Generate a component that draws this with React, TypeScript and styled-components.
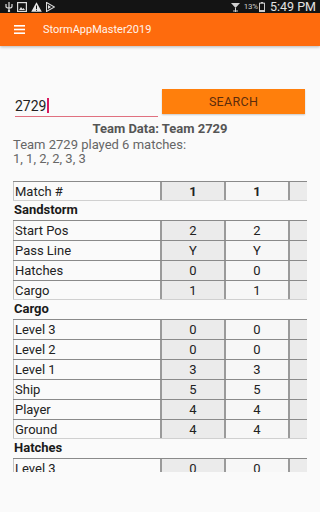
import React from "react";
import styled, { createGlobalStyle } from "styled-components";

const Global = createGlobalStyle`
  html, body { margin: 0; padding: 0; background: #fafafa; }
  body { font-family: Roboto, "Noto Sans", sans-serif; width: 320px; height: 512px; overflow: hidden; }
  * { box-sizing: border-box; }
`;

const Page = styled.div`
  width: 320px;
  height: 512px;
  display: flex;
  flex-direction: column;
  background: #fafafa;
  overflow: hidden;
`;

const StatusBar = styled.div`
  height: 13px;
  background: #141414;
  display: flex;
  align-items: center;
  justify-content: space-between;
  padding: 0 4px 0 5px;
  color: #d8d8d8;
  flex-shrink: 0;
`;

const StatusGroup = styled.div<{ $gap?: number }>`
  display: flex;
  align-items: center;
  gap: ${(p) => (p.$gap ?? 4)}px;
`;

const Pct = styled.span`
  font-size: 8px;
  color: #cfcfcf;
  letter-spacing: -0.2px;
`;

const Clock = styled.span`
  font-size: 12.5px;
  color: #e2e2e2;
  margin-left: 1px;
`;

const AppBar = styled.div`
  height: 33px;
  background: #fe6b0d;
  display: flex;
  align-items: center;
  padding-left: 14px;
  gap: 18px;
  box-shadow: 0 1px 3px rgba(0,0,0,0.28);
  position: relative;
  z-index: 1;
  flex-shrink: 0;
`;

const Title = styled.div`
  color: #fff4ec;
  font-size: 11px;
`;

const Form = styled.div`
  display: grid;
  grid-template-columns: 143px 143px;
  column-gap: 4px;
  margin: 43px 0 0 15px;
`;

const Field = styled.div`
  height: 28px;
  border-bottom: 1.5px solid #e0707f;
  padding-top: 10px;
  font-size: 14px;
  color: #222;
  display: flex;
  align-items: flex-start;
  line-height: 14px;
`;

const Caret = styled.span`
  display: inline-block;
  width: 1.5px;
  height: 15px;
  margin-top: -1px;
  background: #d81b60;
  margin-left: 1px;
`;

const Button = styled.div`
  height: 25px;
  background: #ff7f0c;
  color: #5c2c0c;
  font-size: 12.5px;
  letter-spacing: 0.3px;
  display: flex;
  align-items: center;
  justify-content: center;
  box-shadow: 0 1px 1.5px rgba(0,0,0,0.2);
`;

const Heading = styled.div`
  margin-top: 4px;
  text-align: center;
  font-weight: bold;
  font-size: 13px;
  line-height: 16px;
  color: #555;
`;

const Info = styled.div`
  margin: 1px 0 0 13px;
  font-size: 13px;
  line-height: 14px;
  color: #666;
`;

const TableWrap = styled.div`
  margin: 15px 0 0 13px;
  width: 294px;
  height: 291px;
  overflow: hidden;
`;

const Row = styled.div<{ $last?: boolean }>`
  display: flex;
  height: 20px;
  width: 340px;
  border-top: 1px solid #8a8a8a;
  border-bottom: ${(p) => (p.$last ? "1px solid #d0d0d0" : "none")};
  margin-bottom: ${(p) => (p.$last ? "-1px" : "0")};
`;

const Label = styled.div`
  width: 147px;
  border-left: 1px solid #c4c4c4;
  padding-left: 1px;
  font-size: 13px;
  line-height: 19px;
  color: #222;
  white-space: nowrap;
`;

const Cell = styled.div<{ $alt?: boolean; $bold?: boolean }>`
  width: 64px;
  border-left: 2px solid #9a9a9a;
  background: ${(p) => (p.$alt ? "#f7f7f7" : "#ebebeb")};
  text-align: center;
  font-size: 13px;
  line-height: 20px;
  font-weight: ${(p) => (p.$bold ? "bold" : "normal")};
  color: #222;
`;

const Section = styled.div`
  height: 20px;
  padding-left: 1px;
  font-weight: bold;
  font-size: 13px;
  line-height: 20px;
  color: #1a1a1a;
`;

const Hamburger = () => (
  <svg width="11" height="9" viewBox="0 0 11 9">
    <rect x="0" y="0" width="11" height="1.6" fill="#fff" />
    <rect x="0" y="3.7" width="11" height="1.6" fill="#fff" />
    <rect x="0" y="7.4" width="11" height="1.6" fill="#fff" />
  </svg>
);

const StatusLeft = () => (
  <StatusGroup>
    <svg width="8" height="10" viewBox="0 0 8 10">
      <path d="M4 0 L4 10 M1 2 L1 4.5 Q1 6 4 6 Q7 6 7 4.5 L7 2" stroke="#ddd" strokeWidth="1.2" fill="none" />
      <circle cx="4" cy="9" r="1.2" fill="#ddd" />
    </svg>
    <svg width="10" height="10" viewBox="0 0 10 10">
      <rect x="0.6" y="0.6" width="8.8" height="8.8" stroke="#ddd" strokeWidth="1.2" fill="none" />
      <path d="M2 8 L4 5 L5.5 7 L6.5 6 L8 8 Z" fill="#ddd" />
    </svg>
    <svg width="11" height="10" viewBox="0 0 11 10">
      <path d="M5.5 0.3 L10.8 9.7 L0.2 9.7 Z" fill="#e8e8e8" />
      <rect x="5" y="3.5" width="1" height="3.5" fill="#141414" />
      <rect x="5" y="7.8" width="1" height="1" fill="#141414" />
    </svg>
    <svg width="9" height="10" viewBox="0 0 9 10">
      <path d="M0.5 0.5 L8.5 5 L0.5 9.5 Z" stroke="#ddd" strokeWidth="1.1" fill="none" />
      <path d="M2 3 L5 5 L2 7 Z" fill="#ddd" />
    </svg>
  </StatusGroup>
);

const StatusRight = () => (
  <StatusGroup>
    <svg width="9" height="10" viewBox="0 0 9 10">
      <path d="M0 1 L9 1 L4.5 6 Z" fill="#d0d0d0" />
      <rect x="4" y="6" width="1" height="4" fill="#d0d0d0" />
      <rect x="2" y="8.5" width="5" height="1" fill="#d0d0d0" />
    </svg>
    <StatusGroup $gap={1}>
      <Pct>13%</Pct>
      <svg width="6" height="10" viewBox="0 0 6 10">
        <rect x="1.8" y="0" width="2.4" height="1.2" fill="#ccc" />
        <rect x="0.5" y="1.2" width="5" height="8.3" stroke="#ccc" strokeWidth="1" fill="none" />
        <rect x="1" y="8" width="4" height="1.5" fill="#ccc" />
      </svg>
    </StatusGroup>
    <Clock>5:49 PM</Clock>
  </StatusGroup>
);

type DataRow = { label: string; values: [string, string, string] };
type Group = { title?: string; rows: DataRow[]; bold?: boolean };

const groups: Group[] = [
  { rows: [{ label: "Match #", values: ["1", "1", "2"] }], bold: true },
  {
    title: "Sandstorm",
    rows: [
      { label: "Start Pos", values: ["2", "2", ""] },
      { label: "Pass Line", values: ["Y", "Y", ""] },
      { label: "Hatches", values: ["0", "0", ""] },
      { label: "Cargo", values: ["1", "1", ""] },
    ],
  },
  {
    title: "Cargo",
    rows: [
      { label: "Level 3", values: ["0", "0", ""] },
      { label: "Level 2", values: ["0", "0", ""] },
      { label: "Level 1", values: ["3", "3", ""] },
      { label: "Ship", values: ["5", "5", ""] },
      { label: "Player", values: ["4", "4", ""] },
      { label: "Ground", values: ["4", "4", ""] },
    ],
  },
  {
    title: "Hatches",
    rows: [
      { label: "Level 3", values: ["0", "0", ""] },
      { label: "Level 2", values: ["0", "0", ""] },
    ],
  },
];

export default function App() {
  return (
    <Page>
      <Global />
      <StatusBar>
        <StatusLeft />
        <StatusRight />
      </StatusBar>
      <AppBar>
        <Hamburger />
        <Title>StormAppMaster2019</Title>
      </AppBar>
      <Form>
        <Field>
          2729
          <Caret />
        </Field>
        <Button>SEARCH</Button>
      </Form>
      <Heading>Team Data: Team 2729</Heading>
      <Info>
        Team 2729 played 6 matches:
        <br />
        1, 1, 2, 2, 3, 3
      </Info>
      <TableWrap>
        {groups.map((g, gi) => (
          <React.Fragment key={gi}>
            {g.title && <Section>{g.title}</Section>}
            {g.rows.map((r, ri) => (
              <Row key={ri} $last={ri === g.rows.length - 1}>
                <Label>{r.label}</Label>
                {r.values.map((v, vi) => (
                  <Cell key={vi} $alt={vi === 1} $bold={g.bold}>
                    {vi < 2 ? v : ""}
                  </Cell>
                ))}
              </Row>
            ))}
          </React.Fragment>
        ))}
      </TableWrap>
    </Page>
  );
}
